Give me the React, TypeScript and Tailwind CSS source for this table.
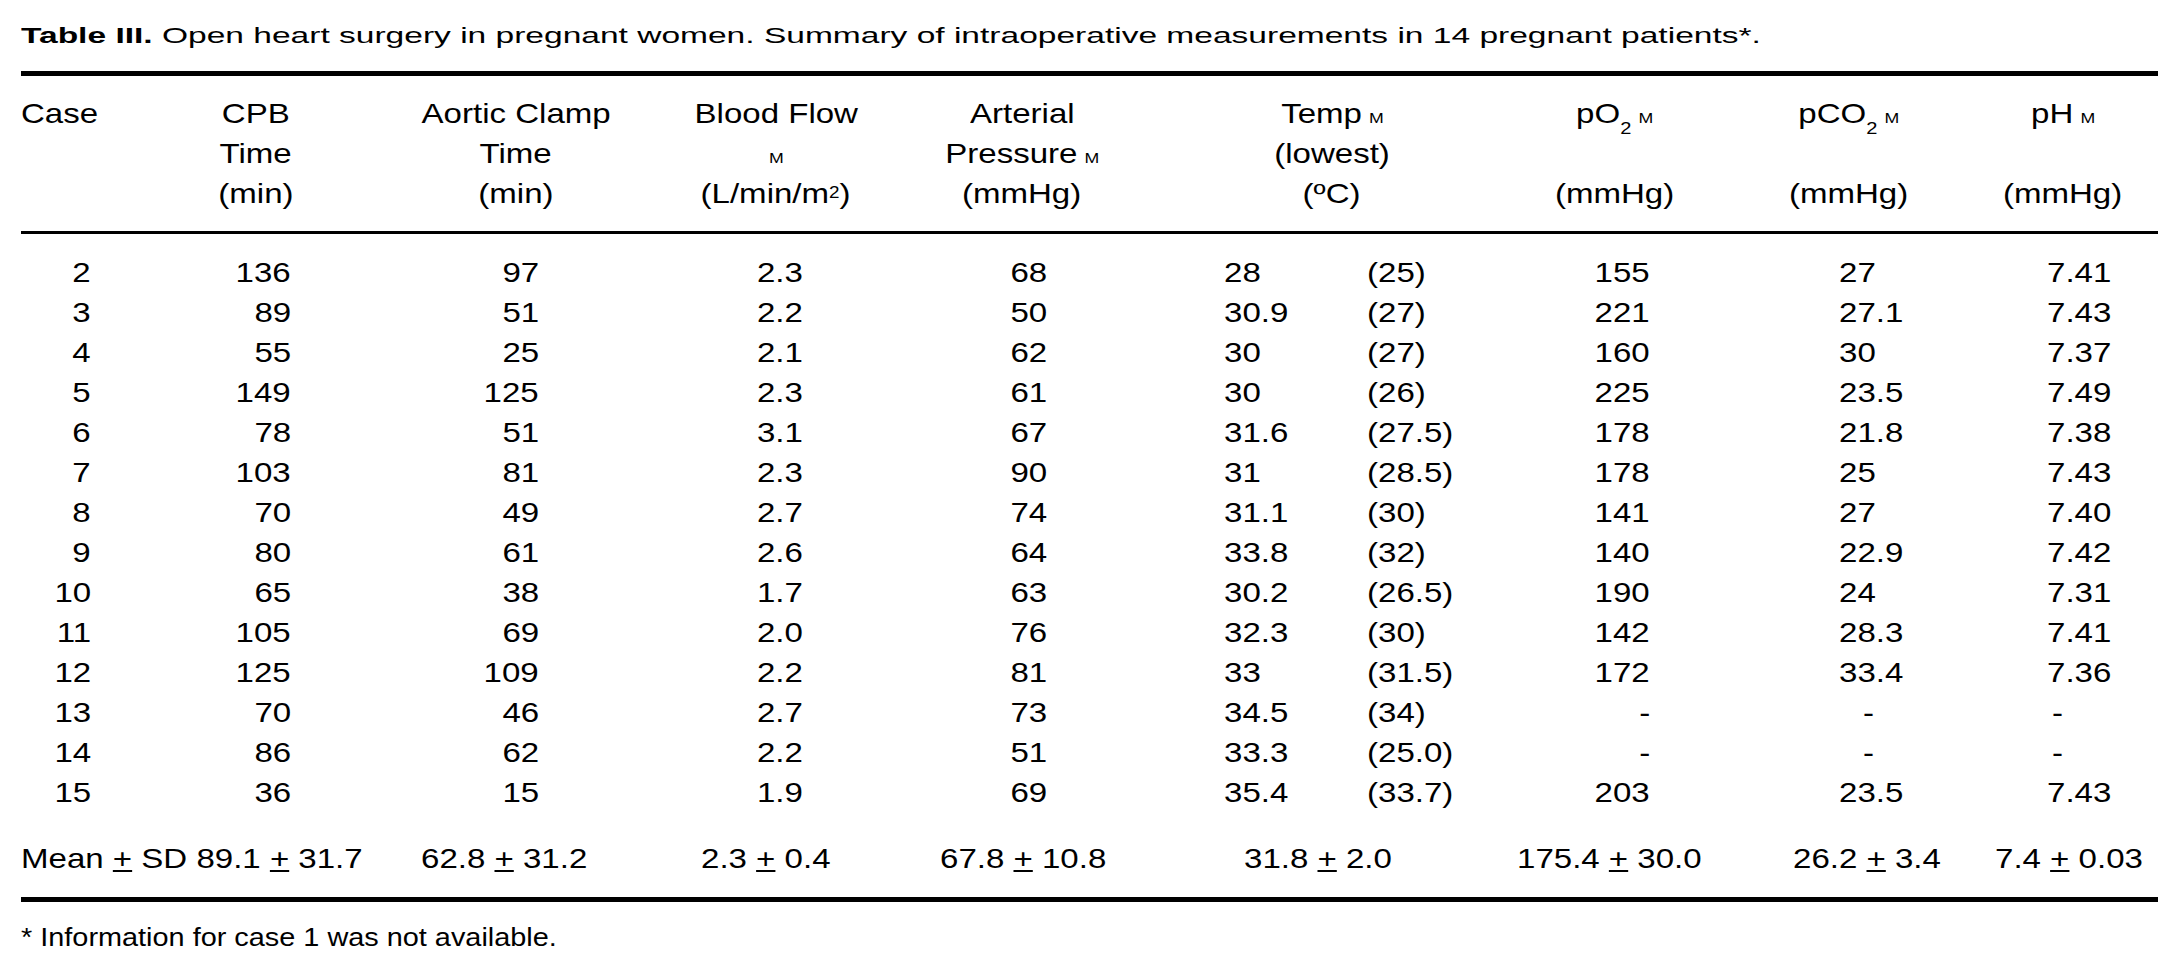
import React from "react";

type Align = "l" | "r" | "c";

const originCls: Record<Align, string> = {
  l: "origin-left",
  r: "origin-right",
  c: "origin-center",
};

function S({ a, children }: { a: Align; children: React.ReactNode }) {
  return (
    <span className={`inline-block whitespace-nowrap scale-x-[1.18] ${originCls[a]}`}>
      {children}
    </span>
  );
}

const Mu = () => <span className="text-[15px] ml-[6px]">M</span>;
const Sub2 = () => <span className="relative top-[11px] text-[17px]">2</span>;
const Pm = () => <span className="underline">+</span>;

const rows: string[][] = [
  ["2", "136", "97", "2.3", "68", "28", "(25)", "155", "27", "7.41"],
  ["3", "89", "51", "2.2", "50", "30.9", "(27)", "221", "27.1", "7.43"],
  ["4", "55", "25", "2.1", "62", "30", "(27)", "160", "30", "7.37"],
  ["5", "149", "125", "2.3", "61", "30", "(26)", "225", "23.5", "7.49"],
  ["6", "78", "51", "3.1", "67", "31.6", "(27.5)", "178", "21.8", "7.38"],
  ["7", "103", "81", "2.3", "90", "31", "(28.5)", "178", "25", "7.43"],
  ["8", "70", "49", "2.7", "74", "31.1", "(30)", "141", "27", "7.40"],
  ["9", "80", "61", "2.6", "64", "33.8", "(32)", "140", "22.9", "7.42"],
  ["10", "65", "38", "1.7", "63", "30.2", "(26.5)", "190", "24", "7.31"],
  ["11", "105", "69", "2.0", "76", "32.3", "(30)", "142", "28.3", "7.41"],
  ["12", "125", "109", "2.2", "81", "33", "(31.5)", "172", "33.4", "7.36"],
  ["13", "70", "46", "2.7", "73", "34.5", "(34)", "-", "-", "-"],
  ["14", "86", "62", "2.2", "51", "33.3", "(25.0)", "-", "-", "-"],
  ["15", "36", "15", "1.9", "69", "35.4", "(33.7)", "203", "23.5", "7.43"],
];

const gridCols =
  "grid grid-cols-[70px_200px_248px_264px_244px_453px_150px_350px_158px]";

function HLine({ children }: { children?: React.ReactNode }) {
  return <div className="h-[40px] flex justify-center whitespace-nowrap">{children ? <S a="c">{children}</S> : null}</div>;
}

function HeaderBox({ w, pl, lines }: { w: string; pl?: string; lines: React.ReactNode[] }) {
  return (
    <div className={`flex ${pl ? pl : "justify-end"}`}>
      <div className={`${w} flex flex-col`}>
        {lines.map((l, i) => (
          <HLine key={i}>{l}</HLine>
        ))}
      </div>
    </div>
  );
}

export default function App() {
  return (
    <div className="w-[2178px] h-[966px] overflow-hidden bg-white text-black font-['Liberation_Sans',Arial,sans-serif]">
      <div className="pl-[21px] w-[2158px]">
        {/* Title */}
        <div className="pt-[20px] h-[52px] leading-[32px] text-[22.5px] whitespace-nowrap">
          <span className="inline-block origin-left scale-x-[1.49]">
            <span className="font-bold">Table III.</span> Open heart surgery in pregnant women. Summary of
            intraoperative measurements in 14 pregnant patients*.
          </span>
        </div>

        {/* top thick rule */}
        <div className="mt-[19px] h-[5px] bg-black" />

        {/* Header */}
        <div className={`${gridCols} mt-[18px] text-[28px] leading-[40px]`}>
          <div className="h-[120px]">
            <div className="h-[40px]">
              <S a="l">Case</S>
            </div>
          </div>
          <HeaderBox w="w-[70px]" lines={["CPB", "Time", "(min)"]} />
          <HeaderBox w="w-[46px]" lines={["Aortic Clamp", "Time", "(min)"]} />
          <HeaderBox
            w="w-[54px]"
            lines={[
              "Blood Flow",
              <span className="text-[15px]">M</span>,
              <>
                (L/min/m<span className="relative -top-[5px] text-[16px]">2</span>)
              </>,
            ]}
          />
          <HeaderBox
            w="w-[50px]"
            lines={[
              "Arterial",
              <>
                Pressure
                <Mu />
              </>,
              "(mmHg)",
            ]}
          />
          <HeaderBox
            w="w-[216px]"
            pl="pl-[177px]"
            lines={[
              <>
                Temp
                <Mu />
              </>,
              "(lowest)",
              "(ºC)",
            ]}
          />
          <HeaderBox
            w="w-[70px]"
            lines={[
              <>
                pO<Sub2 />
                <Mu />
              </>,
              null,
              "(mmHg)",
            ]}
          />
          <HeaderBox
            w="w-[116px]"
            pl="pl-[141px]"
            lines={[
              <>
                pCO<Sub2 />
                <Mu />
              </>,
              null,
              "(mmHg)",
            ]}
          />
          <HeaderBox
            w="w-[116px]"
            pl="pl-[5px]"
            lines={[
              <>
                pH
                <Mu />
              </>,
              null,
              "(mmHg)",
            ]}
          />
        </div>

        {/* thin rule */}
        <div className="mt-[17px] h-[3px] bg-black" />

        {/* Data rows */}
        <div className="mt-[19px] text-[28px] leading-[40px]">
          {rows.map((r) => (
            <div key={r[0]} className={`${gridCols} h-[40px]`}>
              <div className="text-right"><S a="r">{r[0]}</S></div>
              <div className="text-right"><S a="r">{r[1]}</S></div>
              <div className="text-right"><S a="r">{r[2]}</S></div>
              <div className="text-right"><S a="r">{r[3]}</S></div>
              <div className="text-right"><S a="r">{r[4]}</S></div>
              <div className="flex pl-[177px]">
                <div className="w-[143px]"><S a="l">{r[5]}</S></div>
                <div><S a="l">{r[6]}</S></div>
              </div>
              <div className="text-right"><S a="r">{r[7]}</S></div>
              <div className={r[8] === "-" ? "pl-[213px]" : "pl-[189px]"}><S a="l">{r[8]}</S></div>
              <div className={r[9] === "-" ? "pl-[52px]" : "pl-[47px]"}><S a="l">{r[9]}</S></div>
            </div>
          ))}
        </div>

        {/* Mean row */}
        <div className="mt-[26px] h-[40px] grid grid-cols-[400px_280px_239px_304px_273px_276px_202px_1fr] text-[28px] leading-[40px]">
          <div><S a="l">Mean <Pm /> SD 89.1 <Pm /> 31.7</S></div>
          <div><S a="l">62.8 <Pm /> 31.2</S></div>
          <div><S a="l">2.3 <Pm /> 0.4</S></div>
          <div><S a="l">67.8 <Pm /> 10.8</S></div>
          <div><S a="l">31.8 <Pm /> 2.0</S></div>
          <div><S a="l">175.4 <Pm /> 30.0</S></div>
          <div><S a="l">26.2 <Pm /> 3.4</S></div>
          <div><S a="l">7.4 <Pm /> 0.03</S></div>
        </div>

        {/* bottom thick rule */}
        <div className="mt-[18px] h-[5px] bg-black" />

        {/* footnote */}
        <div className="mt-[17px] h-[36px] text-[26px] leading-[36px] whitespace-nowrap">
          <span className="inline-block origin-left scale-x-[1.11]">* Information for case 1 was not available.</span>
        </div>
      </div>
    </div>
  );
}
